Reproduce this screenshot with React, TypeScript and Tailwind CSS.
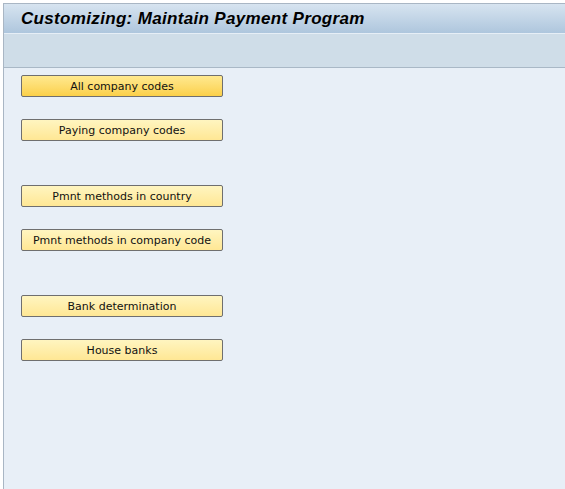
const buttons = [
  { label: "All company codes", active: true, gap: false },
  { label: "Paying company codes", active: false, gap: false },
  { label: "Pmnt methods in country", active: false, gap: true },
  { label: "Pmnt methods in company code", active: false, gap: false },
  { label: "Bank determination", active: false, gap: true },
  { label: "House banks", active: false, gap: false },
];

const App = () => {
  return (
    <div className="w-[565px] h-[489px] bg-white pt-[3px] pl-[3px] overflow-hidden">
      <div className="h-full flex flex-col border-l border-t border-[#a9b6c4] bg-[#e8eff7]">
        {/* title bar */}
        <div className="h-[30px] flex items-center pl-[17px] bg-gradient-to-b from-[#d7e4f0] to-[#aec6dd] border-b border-[#e6eef6]">
          <h1 className="font-['Liberation_Sans',Arial,sans-serif] font-bold italic text-[17px] text-[#000] tracking-[0.33px]">
            Customizing: Maintain Payment Program
          </h1>
        </div>
        {/* toolbar */}
        <div className="h-[34px] bg-[#cfdde8] border-b border-[#a9b8c6]" />
        {/* body */}
        <div className="flex-1 flex flex-col pl-[17px] pt-[7px]">
          {buttons.map((b, i) => (
            <button
              key={i}
              className={`w-[202px] h-[22px] rounded-[2px] border border-[#6f6f6f] text-[11px] text-[#111] font-['DejaVu_Sans',Tahoma,sans-serif] leading-none flex items-center justify-center pt-[1px] ${
                b.active
                  ? "bg-gradient-to-b from-[#ffe98e] to-[#fbd048]"
                  : "bg-gradient-to-b from-[#fff5c0] to-[#ffe794]"
              } ${i === 0 ? "" : b.gap ? "mt-[44px]" : "mt-[22px]"}`}
            >
              {b.label}
            </button>
          ))}
        </div>
      </div>
    </div>
  );
};

export default App;
